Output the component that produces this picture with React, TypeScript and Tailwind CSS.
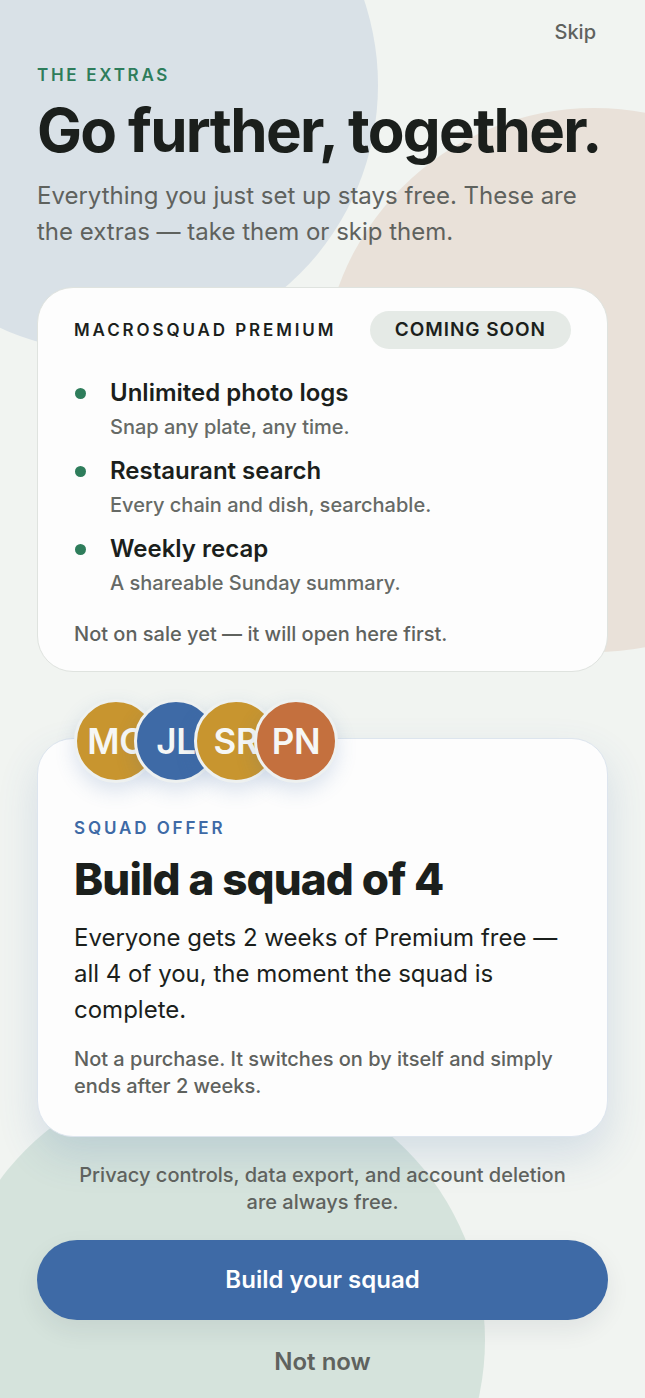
const FEATURES = [
  { title: "Unlimited photo logs", sub: "Snap any plate, any time." },
  { title: "Restaurant search", sub: "Every chain and dish, searchable." },
  { title: "Weekly recap", sub: "A shareable Sunday summary." },
];

const SQUAD = [
  { initials: "MC", color: "bg-[#c8952f]" },
  { initials: "JL", color: "bg-[#3e6aa6]" },
  { initials: "SR", color: "bg-[#c8952f]" },
  { initials: "PN", color: "bg-[#c4703e]" },
];

export default function App() {
  return (
    <div className="relative min-h-[1398px] w-full overflow-hidden bg-[#f1f4f1] font-['Inter','Noto_Sans',sans-serif] text-[#1b1f1c]">
      {/* ── Background blobs ── */}
      <div className="pointer-events-none absolute left-[-156px] top-[-182px] h-[534px] w-[534px] rounded-full bg-[#d9e1e7]" />
      <div className="pointer-events-none absolute left-[322px] top-[108px] h-[544px] w-[544px] rounded-full bg-[#e9e1d9]" />
      <div className="pointer-events-none absolute left-[-53px] top-[1071px] h-[538px] w-[538px] rounded-full bg-[#d5e3dc]" />

      <div className="relative flex flex-col px-[37px]">
        <div className="flex justify-end pt-[18px] pr-[12px]">
          <button className="text-[20px] leading-[28px] font-medium text-[#5f625e]">Skip</button>
        </div>

        <p className="mt-[17px] text-[17px] leading-[24px] font-semibold tracking-[0.16em] text-[#2e7d5b]">
          THE EXTRAS
        </p>
        <h1 className="mt-[13px] text-[60px] leading-[60px] font-bold tracking-[-0.028em] text-[#1b1f1c]">
          Go further, together.
        </h1>
        <p className="mt-[18px] text-[24px] leading-[36px] text-[#5f625e]">
          Everything you just set up stays free. These are the extras — take them or skip them.
        </p>

        {/* ── Premium card ── */}
        <section className="mt-[37px] rounded-[36px] border border-[#dfe3df] bg-[#fdfdfd] px-[36px] pt-[23px] pb-[24px]">
          <div className="flex items-center justify-between">
            <span className="text-[17px] leading-[24px] font-semibold tracking-[0.17em] text-[#1b1f1c]">
              MACROSQUAD PREMIUM
            </span>
            <span className="flex h-[38px] items-center rounded-full bg-[#e5eae6] px-[25px] text-[19px] font-semibold tracking-[0.05em] text-[#1b1f1c]">
              COMING SOON
            </span>
          </div>

          <ul className="mt-[28px] flex flex-col gap-[15px]">
            {FEATURES.map((f) => (
              <li key={f.title} className="flex gap-[24px]">
                <span className="mt-[11px] ml-[1px] h-[11px] w-[11px] shrink-0 rounded-full bg-[#2e7d5b]" />
                <div>
                  <p className="text-[24px] leading-[32px] font-semibold text-[#1b1f1c]">{f.title}</p>
                  <p className="mt-[5px] text-[20px] leading-[26px] font-medium text-[#666a66]">{f.sub}</p>
                </div>
              </li>
            ))}
          </ul>

          <p className="mt-[25px] text-[20px] leading-[26px] font-medium text-[#5f625e]">
            Not on sale yet — it will open here first.
          </p>
        </section>

        {/* ── Squad offer card ── */}
        <section className="mt-[66px] rounded-[36px] border border-[#dde5ee] bg-[#fdfdfd] px-[36px] pb-[36px] shadow-[0_18px_40px_rgba(62,106,166,0.16)]">
          <div className="-mt-[40px] flex">
            {SQUAD.map((m, i) => (
              <div
                key={m.initials}
                className={`relative flex h-[84px] w-[84px] shrink-0 items-center justify-center overflow-hidden rounded-full border-[3px] border-[#eef1f0] shadow-[0_8px_20px_rgba(62,106,166,0.18)] ${m.color} ${
                  i > 0 ? "-ml-[24px]" : ""
                }`}
              >
                <span className="text-[35px] font-semibold tracking-[-0.01em] text-[#f6f7f5]">{m.initials}</span>
              </div>
            ))}
          </div>

          <p className="mt-[33px] text-[17px] leading-[24px] font-semibold tracking-[0.17em] text-[#3e6aa6]">
            SQUAD OFFER
          </p>
          <h2 className="mt-[13px] text-[44px] leading-[53px] font-extrabold tracking-[-0.02em] text-[#1b1f1c]">
            Build a squad of 4
          </h2>
          <p className="mt-[14px] text-[24px] leading-[36px] text-[#1b1f1c]">
            Everyone gets 2 weeks of Premium free — all 4 of you, the moment the squad is complete.
          </p>
          <p className="mt-[18px] text-[20px] leading-[27px] font-medium text-[#5f625e]">
            Not a purchase. It switches on by itself and simply ends after 2 weeks.
          </p>
        </section>

        <p className="mt-[25px] px-[30px] text-center text-[20px] leading-[27px] font-medium text-[#5f625e]">
          Privacy controls, data export, and account deletion are always free.
        </p>

        <button className="mt-[24px] h-[80px] w-full rounded-[40px] bg-[#3e6aa6] text-[24px] font-semibold text-white shadow-[0_10px_24px_rgba(30,40,60,0.08)]">
          Build your squad
        </button>

        <button className="mt-[26px] text-[24px] leading-[32px] font-semibold text-[#5f625e]">Not now</button>
      </div>
    </div>
  );
}
